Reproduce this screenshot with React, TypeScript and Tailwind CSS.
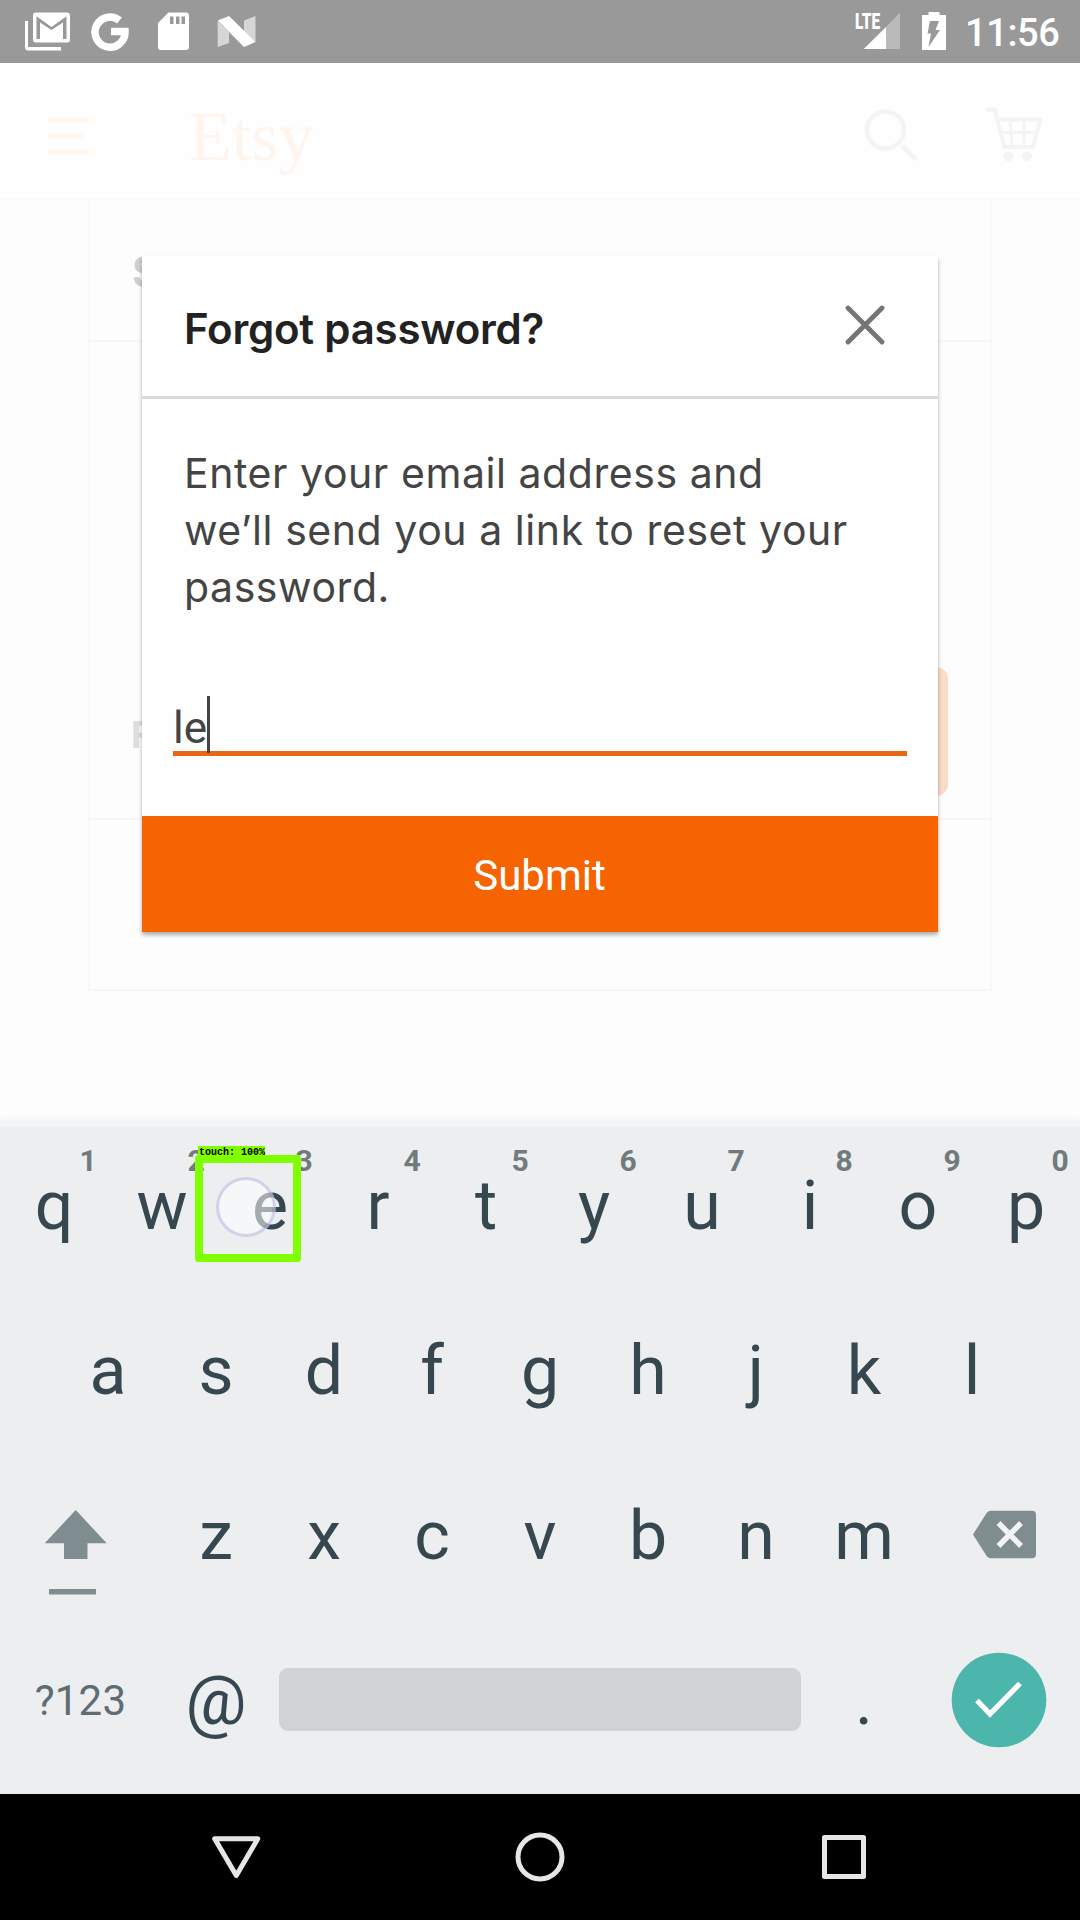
import React from "react";

function StatusBar() {
  return (
    <div className="flex h-[63px] shrink-0 items-start justify-between bg-[#999999] text-white">
      <svg width="280" height="63" viewBox="0 0 280 63" fill="#fff">
        <path d="M25 21h3v26h33v3.500H28a3 3 0 0 1-3-3z" />
        <path d="M36 12.500h31a3 3 0 0 1 3 3v24a3 3 0 0 1-3 3H36a3 3 0 0 1-3-3v-24a3 3 0 0 1 3-3z" />
        <path d="M36.500 39V16.200L51.500 27L66.500 16.200V39H63V22.500L51.500 30L40 22.500V39z" fill="#999" />
        <path d="M119.500 20.500A15 15 0 1 0 125 31.500H111" fill="none" stroke="#fff" strokeWidth="7.500" />
        <path d="M168.500 12.500H186a3 3 0 0 1 3 3V47a3 3 0 0 1-3 3h-25a3 3 0 0 1-3-3V23z" />
        <path d="M170 16.500h3.500V24H170zM176 16.500h3.500V24H176zM181.500 16.500h3.500V24h-3.500z" fill="#999" />
        <path d="M217.700 21L229 32V43L217.700 47zM244 20.500L255.500 16V42L244 32z" fill="#d6d6d6" />
        <path d="M217.700 20.500L229 16L255.500 42L244 47z" />
      </svg>
      <div className="flex h-[63px]">
        <div className="relative">
          <svg width="106" height="63" viewBox="850 0 106 63" fill="#fff">
            <path d="M900 12.500V49H886V27z" fill="#bababa" />
            <path d="M886 27V49H863.700z" />
            <path d="M928.500 12h11v3h6.500v35h-24V15h6.500z" />
            <path d="M930 21h9l-3.500 9h4.500l-11.500 17 2.500-13.500h-3.500z" fill="#999" />
          </svg>
          <span className="absolute top-[11px] left-[5px] origin-left scale-x-[0.7] font-['Roboto'] text-[22px] leading-[22px] font-black">
            LTE
          </span>
        </div>
        <span className="w-[124px] pt-[1px] pl-[9px] font-['Roboto'] text-[38px] leading-[64px] font-medium tracking-[-0.4px]">
          11:56
        </span>
      </div>
    </div>
  );
}

function AppHeader() {
  return (
    <div className="flex h-[137px] shrink-0 items-start justify-between border-b border-[#fafafa] bg-[#fefefe]">
      <div className="flex">
        <div className="flex w-[189px] flex-col gap-[10px] pt-[54px] pl-[48px]">
          <div className="h-[6px] w-[47px] bg-[#fff8f4]" />
          <div className="h-[6px] w-[35px] bg-[#fff8f4]" />
          <div className="h-[6px] w-[47px] bg-[#fff8f4]" />
        </div>
        <span className="pt-[35px] font-['Liberation_Serif'] text-[70px] leading-[78px] text-[#fff5ef]">Etsy</span>
      </div>
      <svg width="220" height="120" viewBox="860 63 220 120" fill="none" stroke="#f4f4f4">
        <circle cx="885.500" cy="130" r="18.500" strokeWidth="4.500" />
        <path d="M902 146l14 13.500" strokeWidth="5" />
        <path d="M986 109.500h8.500L1004.500 147H1033L1040.500 119.500H998" strokeWidth="4" />
        <path d="M1001 132.500h36M1010 119l2 28M1024 119v28" strokeWidth="3" />
        <circle cx="1008.500" cy="156.500" r="5" fill="#f4f4f4" stroke="none" />
        <circle cx="1027" cy="156.500" r="5" fill="#f4f4f4" stroke="none" />
      </svg>
    </div>
  );
}

function SignInCard() {
  return (
    <div className="mx-[88px] flex h-[791px] flex-col border-x-2 border-b-2 border-x-[#f9f9f9] border-b-[#f5f5f5]">
      <div className="h-[142px] shrink-0 border-b-2 border-[#f6f6f6] pt-[46px] pl-[42px] font-['Inter'] text-[42px] leading-[52px] font-bold text-[#cfcfcf]">
        S
      </div>
      <div className="flex h-[478px] shrink-0 items-start justify-between border-b-2 border-[#f6f6f6]">
        <span className="pt-[368px] pl-[41px] font-['Inter'] text-[37px] leading-[50px] font-bold text-[#dddddd]">F</span>
        <div className="mt-[325px] mr-[42px] h-[129px] w-[300px] rounded-[12px] bg-[#fadbc8]" />
      </div>
    </div>
  );
}

function Dialog() {
  return (
    <div className="absolute top-[193px] left-[142px] flex h-[676px] w-[796px] flex-col bg-[#fefefe] shadow-[0_3px_4px_rgba(0,0,0,0.32)]">
      <div className="flex h-[143px] shrink-0 items-start justify-between border-b-[3px] border-[#d9d9d9] pr-[53px] pl-[42px]">
        <h1 className="pt-[47px] font-['Inter'] text-[42px] leading-[52px] font-semibold tracking-[-0.23px] whitespace-nowrap text-[#222222]">
          Forgot password?
        </h1>
        <svg className="mt-[49px]" width="40" height="40" viewBox="0 0 40 40" stroke="#757575" strokeWidth="4.800" strokeLinecap="round">
          <path d="M3 3L37 37M37 3L3 37" />
        </svg>
      </div>
      <p className="h-[297px] shrink-0 pt-[46px] pl-[42px] font-['Inter'] text-[41px] leading-[57px] tracking-[0.56px] whitespace-nowrap text-[#444444]">
        Enter your email address and
        <br />
        we’ll send you a link to reset your
        <br />
        password.
      </p>
      <div className="mx-[31px] flex h-[60px] shrink-0 items-start border-b-[5px] border-[#e86714]">
        <span className="w-[34px] pt-[7px] font-['Roboto'] text-[44px] leading-[50px] text-[#444444]">le</span>
        <div className="h-[57px] w-[3px] bg-[#444444]" />
      </div>
      <div className="mt-auto flex h-[116px] items-center justify-center bg-[#f56400] pt-[2px] pr-[1px] font-['Roboto'] text-[42px] text-white">
        Submit
      </div>
    </div>
  );
}

function Key({ label, hint }: { label: string; hint?: string }) {
  return (
    <div className="relative h-[165px] w-[108px] shrink-0 text-center text-[68px] leading-[165px] text-[#37474f]">
      {label}
      {hint && (
        <span className="absolute top-[21px] left-[68px] w-[40px] text-center text-[30px] leading-[32px] font-bold text-[#717a7c]">
          {hint}
        </span>
      )}
    </div>
  );
}

function TouchMarker() {
  return (
    <div className="absolute top-[26px] left-[195px] h-[116px] w-[106px]">
      <div className="absolute top-[31px] left-[21px] size-[60px] rounded-full border-[3px] border-[#c9c5e6]/70 bg-white/55 bg-clip-padding" />
      <div className="absolute top-[9px] left-0 h-[107px] w-[106px] rounded-[3px] border-8 border-[#80ff00]" />
      <span className="absolute top-0 left-[3px] h-[12px] w-[67px] bg-[#80ff00] pl-px font-['Liberation_Mono'] text-[10px] leading-[14px] font-bold whitespace-nowrap text-black">
        touch: 100%
      </span>
    </div>
  );
}

function Keyboard() {
  return (
    <div className="relative flex h-[674px] shrink-0 flex-col bg-[#eceef0] pt-[4px] font-['Roboto'] shadow-[inset_0_7px_0_#f2f4f5,0_-2px_5px_rgba(0,0,0,0.03)]">
      <div className="flex">
        {"qwertyuiop".split("").map((c, i) => (
          <Key key={c} label={c} hint={String((i + 1) % 10)} />
        ))}
      </div>
      <div className="flex px-[54px]">
        {"asdfghjkl".split("").map((c) => (
          <Key key={c} label={c} />
        ))}
      </div>
      <div className="flex">
        <svg width="162" height="165" viewBox="0 1454 162 165" fill="#7f8c90">
          <path d="M75.700 1510L106.700 1543.300H87.500V1559H64V1543.300H44.700z" />
          <path d="M49 1589h47v5.500H49z" />
        </svg>
        {"zxcvbnm".split("").map((c) => (
          <Key key={c} label={c} />
        ))}
        <svg width="162" height="165" viewBox="918 1454 162 165">
          <path
            d="M973 1534.500L986 1514Q988 1510.700 991 1510.700H1032Q1036 1510.700 1036 1514.700V1554.300Q1036 1558.300 1032 1558.300H991Q988 1558.300 986 1555z"
            fill="#7f8c90"
          />
          <path d="M998.500 1523L1021 1546M1021 1523L998.500 1546" stroke="#f1f3f4" strokeWidth="5.500" />
        </svg>
      </div>
      <div className="flex h-[165px]">
        <div className="w-[162px] pr-[1px] text-center text-[42px] leading-[163px] tracking-[0.2px] text-[#5f6c72]">?123</div>
        <Key label="@" />
        <div className="flex w-[540px] items-start px-[9px] pt-[49px]">
          <div className="h-[63px] w-full rounded-[9px] bg-[#d0d3d6]" />
        </div>
        <Key label="." />
        <div className="flex w-[162px] items-start justify-center pt-[33px]">
          <svg width="96" height="96" viewBox="0 0 96 96">
            <circle cx="48" cy="48" r="47.300" fill="#4db6ac" />
            <path d="M26 48.500L39 62L69 31.500" fill="none" stroke="#fff" strokeWidth="5.200" />
          </svg>
        </div>
      </div>
      <TouchMarker />
    </div>
  );
}

function NavBar() {
  return (
    <div className="flex h-[126px] shrink-0 items-center justify-center gap-[252px] bg-black">
      <svg width="52" height="52" viewBox="210 1831 52 52" fill="none" stroke="#e6e6e6" strokeWidth="5" strokeLinejoin="round">
        <path d="M214.700 1838.700H257.800L236.300 1875.500z" />
      </svg>
      <svg width="52" height="52" viewBox="0 0 52 52" fill="none" stroke="#e6e6e6" strokeWidth="5">
        <circle cx="26" cy="26" r="22" />
      </svg>
      <svg width="52" height="52" viewBox="0 0 52 52" fill="none" stroke="#e6e6e6" strokeWidth="5" strokeLinejoin="round">
        <rect x="6.500" y="6.500" width="39" height="39" />
      </svg>
    </div>
  );
}

export default function App() {
  return (
    <div className="flex h-[1920px] w-[1080px] flex-col overflow-hidden bg-[#fdfdfd]">
      <StatusBar />
      <div className="relative flex h-[1057px] shrink-0 flex-col">
        <AppHeader />
        <SignInCard />
        <Dialog />
      </div>
      <Keyboard />
      <NavBar />
    </div>
  );
}
